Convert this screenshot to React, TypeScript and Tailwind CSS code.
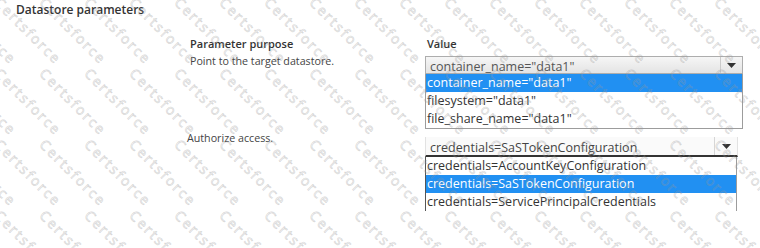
import React from "react";

const Arrow = () => (
  <svg width="9" height="5" viewBox="0 0 9 5">
    <polygon points="0,0 9,0 4.5,5" fill="#333" />
  </svg>
);

const Watermark = () => {
  const items: { x: number; y: number }[] = [];
  for (let j = 0; j < 4; j++) {
    for (let i = -2; i < 18; i++) {
      items.push({ x: 2 + 45 * i, y: -5 + 71 * j });
    }
  }
  return (
    <div className="pointer-events-none absolute inset-0 overflow-hidden">
      {items.map((p, k) => (
        <span
          key={k}
          className="absolute origin-top-left rotate-45 whitespace-nowrap font-['Open_Sans',sans-serif] text-[14px] leading-none tracking-[2px] text-transparent [-webkit-text-stroke:0.7px_rgba(150,150,150,0.38)]"
          style={{ left: p.x, top: p.y }}
        >
          Certsforce
        </span>
      ))}
    </div>
  );
};

export default function App() {
  return (
    <div className="relative h-[248px] w-[760px] overflow-hidden bg-white font-['Open_Sans',sans-serif] text-[#333]">
      <div className="pl-4 pt-[2px] text-[12px] font-semibold leading-4 text-[#333]">
        Datastore parameters
      </div>

      <div className="mt-[18px] flex text-[11px] font-semibold leading-4 text-[#333]">
        <div className="ml-[190px] w-[235px]">Parameter purpose</div>
        <div className="pl-[2px]">Value</div>
      </div>

      <div className="flex">
        <div className="ml-[190px] w-[235px] pt-[1px] text-[10.7px] leading-4 text-[#444]">
          Point to the target datastore.
        </div>
        <div className="mt-[4px] w-[318px]">
          <div className="flex h-[18px] border border-[#adadad] bg-linear-to-b from-[#f6f6f6] to-[#e4e4e4]">
            <div className="flex-1 overflow-hidden pl-[4px] pt-[1px] text-[12.5px] leading-[18px] text-[#555]">
              container_name="data1"
            </div>
            <div className="flex w-[22px] items-center justify-center border-l border-[#cacaca]">
              <Arrow />
            </div>
          </div>
          <div className="border-x border-b border-[#9c9c9c] bg-white text-[12.5px] leading-[18px] text-[#333]">
            <div className="h-[18px] bg-[#2190f2] pl-[1px] text-white">container_name="data1"</div>
            <div className="h-[18px] pl-[1px]">filesystem="data1"</div>
            <div className="h-[18px] pl-[1px]">file_share_name="data1"</div>
          </div>
        </div>
      </div>

      <div className="flex">
        <div className="ml-[187px] w-[238px] pt-[1px] text-[10.7px] leading-4 text-[#444]">
          Authorize access.
        </div>
        <div className="mt-[8px]">
          <div className="flex h-[20px] w-[313px] border-x border-b-2 border-x-[#e2e2e2] border-b-[#333] bg-[#fafafa]">
            <div className="flex-1 overflow-hidden pl-[4px] pt-[2px] text-[12.5px] leading-[18px] text-[#444]">
              credentials=SaSTokenConfiguration
            </div>
            <div className="flex w-[23px] items-center justify-center border-l border-[#d6d6d6]">
              <Arrow />
            </div>
          </div>
          <div className="w-[312px] border-l border-r border-l-[#555] border-r-[#9c9c9c] bg-white text-[12.5px] leading-[18px] text-[#333]">
            <div className="h-[18px] pl-[1px]">credentials=AccountKeyConfiguration</div>
            <div className="h-[18px] bg-[#2190f2] pl-[1px] text-white">credentials=SaSTokenConfiguration</div>
            <div className="h-[18px] pl-[1px]">credentials=ServicePrincipalCredentials</div>
          </div>
        </div>
      </div>

      <Watermark />
    </div>
  );
}
